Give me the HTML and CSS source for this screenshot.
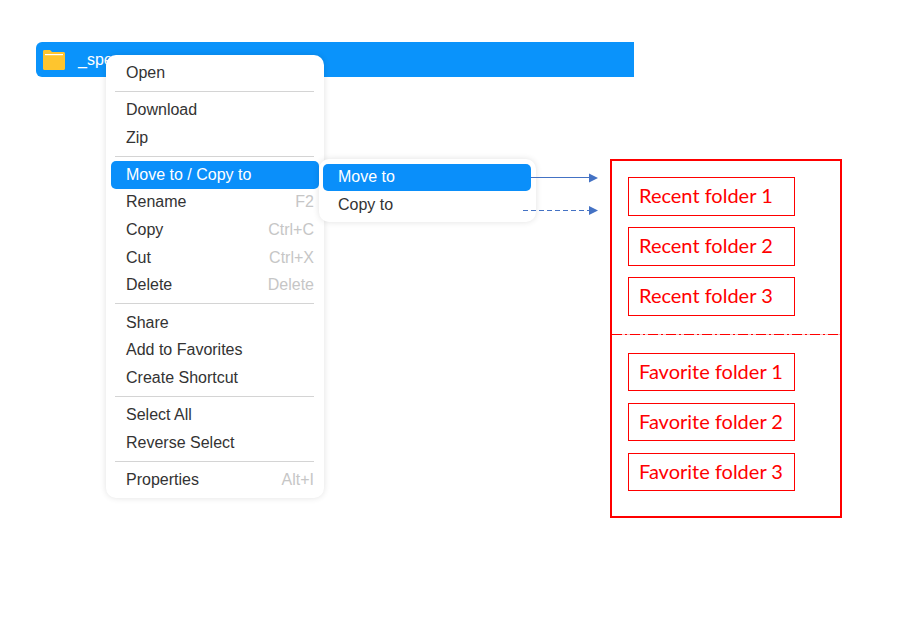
FILE: index.html
```html
<!DOCTYPE html>
<html lang="en">
<head>
  <meta charset="UTF-8" />
  <title>Move to / Copy to</title>
  <link rel="stylesheet" href="styles.css">
</head>
<body>
  <div class="file-row">
    <svg class="folder" width="24" height="22" viewBox="0 0 24 22">
      <path d="M1 2.500C1 1.500 1.600 1 2.500 1H8l2 2h11.500c.9 0 1.500.6 1.500 1.500V19.500c0 .9-.6 1.500-1.500 1.500h-19C1.600 21 1 20.400 1 19.500Z" fill="#fec52e"/>
      <path d="M3 5h18v1.200H3Z" fill="#fff"/>
    </svg>
    <span class="file-name">_spec</span>
  </div>

  <div class="menu main-menu">
    <div class="item">Open</div>
    <div class="sep"></div>
    <div class="item">Download</div>
    <div class="item">Zip</div>
    <div class="sep"></div>
    <div class="item active">Move to / Copy to</div>
    <div class="item">Rename <span class="key">F2</span></div>
    <div class="item">Copy <span class="key">Ctrl+C</span></div>
    <div class="item">Cut <span class="key">Ctrl+X</span></div>
    <div class="item">Delete <span class="key">Delete</span></div>
    <div class="sep"></div>
    <div class="item">Share</div>
    <div class="item">Add to Favorites</div>
    <div class="item">Create Shortcut</div>
    <div class="sep"></div>
    <div class="item">Select All</div>
    <div class="item">Reverse Select</div>
    <div class="sep"></div>
    <div class="item">Properties <span class="key">Alt+I</span></div>
  </div>

  <div class="menu sub-menu">
    <div class="item active">Move to</div>
    <div class="item">Copy to</div>
  </div>

  <!-- annotation arrows -->
  <svg class="arrows" width="923" height="618" viewBox="0 0 923 618">
    <path d="M531 177.500H589" stroke="#4472c4" stroke-width="1" fill="none"/>
    <path d="M589 173.500v9l9-4.500Z" fill="#4472c4"/>
    <path d="M523 210.500H589" stroke="#4472c4" stroke-width="1" stroke-dasharray="5 3" fill="none"/>
    <path d="M589 206v9l9-4.500Z" fill="#4472c4"/>
  </svg>

  <div class="folders">
    <div class="folder-group recent">
      <div class="folder-box">Recent folder 1</div>
      <div class="folder-box">Recent folder 2</div>
      <div class="folder-box">Recent folder 3</div>
    </div>
    <div class="divider"></div>
    <div class="folder-group favorite">
      <div class="folder-box">Favorite folder 1</div>
      <div class="folder-box">Favorite folder 2</div>
      <div class="folder-box">Favorite folder 3</div>
    </div>
  </div>
</body>
</html>
```

FILE: styles.css
```css
body {
  margin: 0;
  width: 923px;
  height: 618px;
  position: relative;
  overflow: hidden;
  background: #fff;
  font-family: "Liberation Sans", Arial, sans-serif;
}

/* File row */
.file-row {
  position: absolute;
  left: 36px;
  top: 42px;
  width: 598px;
  height: 35px;
  display: flex;
  align-items: center;
  padding-left: 6px;
  box-sizing: border-box;
  background: #0a93fb;
  border-radius: 6px 0 0 6px;
  color: #fff;
  font-size: 16px;
}
.file-name {
  margin-left: 12px;
}

/* Menus */
.menu {
  position: absolute;
  box-sizing: border-box;
  background: #fff;
  border-radius: 10px;
  box-shadow: 0 0 6px rgba(0, 0, 0, 0.12);
  color: #333;
  font-size: 16px;
}
.main-menu {
  left: 106px;
  top: 55px;
  width: 218px;
  height: 443px;
  padding: 3.900px 0 3px;
}
.sub-menu {
  left: 319px;
  top: 159px;
  width: 217px;
  height: 63px;
  padding: 4.500px 0;
}
.item {
  display: flex;
  justify-content: space-between;
  align-items: center;
  height: 27.600px;
  margin: 0 5px;
  padding: 0 5px 0 15px;
  border-radius: 5px;
}
.sub-menu .item {
  margin-left: 4px;
}
.item.active {
  background: #0a8ffa;
  color: #fff;
}
.key {
  color: #c6c6c6;
}
.sep {
  height: 1px;
  margin: 4.350px 10px 4.350px 9px;
  background: #d4d4d4;
}

.arrows {
  position: absolute;
  left: 0;
  top: 0;
  pointer-events: none;
}

/* Folder panel */
.folders {
  position: absolute;
  left: 610px;
  top: 159px;
  width: 232px;
  height: 359px;
  box-sizing: border-box;
  border: 2px solid #ff0000;
  font-family: Lato, "Liberation Sans", sans-serif;
  font-size: 20px;
  color: #ff0000;
}
.folder-group {
  display: flex;
  flex-direction: column;
  gap: 11px;
  padding-left: 16px;
}
.recent {
  padding-top: 16px;
}
.favorite {
  padding-top: 18px;
  gap: 12px;
}
.favorite .folder-box {
  height: 38px;
  line-height: 34px;
}
.divider {
  height: 1px;
  margin-top: 18px;
  background: repeating-linear-gradient(to right, #ff0000 0 10px, #ffc0c0 10px 13px, #ff0000 13px 15px, #ffc0c0 15px 18px);
}
.folder-box {
  box-sizing: border-box;
  width: 167px;
  height: 39px;
  line-height: 35px;
  padding-left: 10px;
  border: 1px solid #ff0000;
}
```
